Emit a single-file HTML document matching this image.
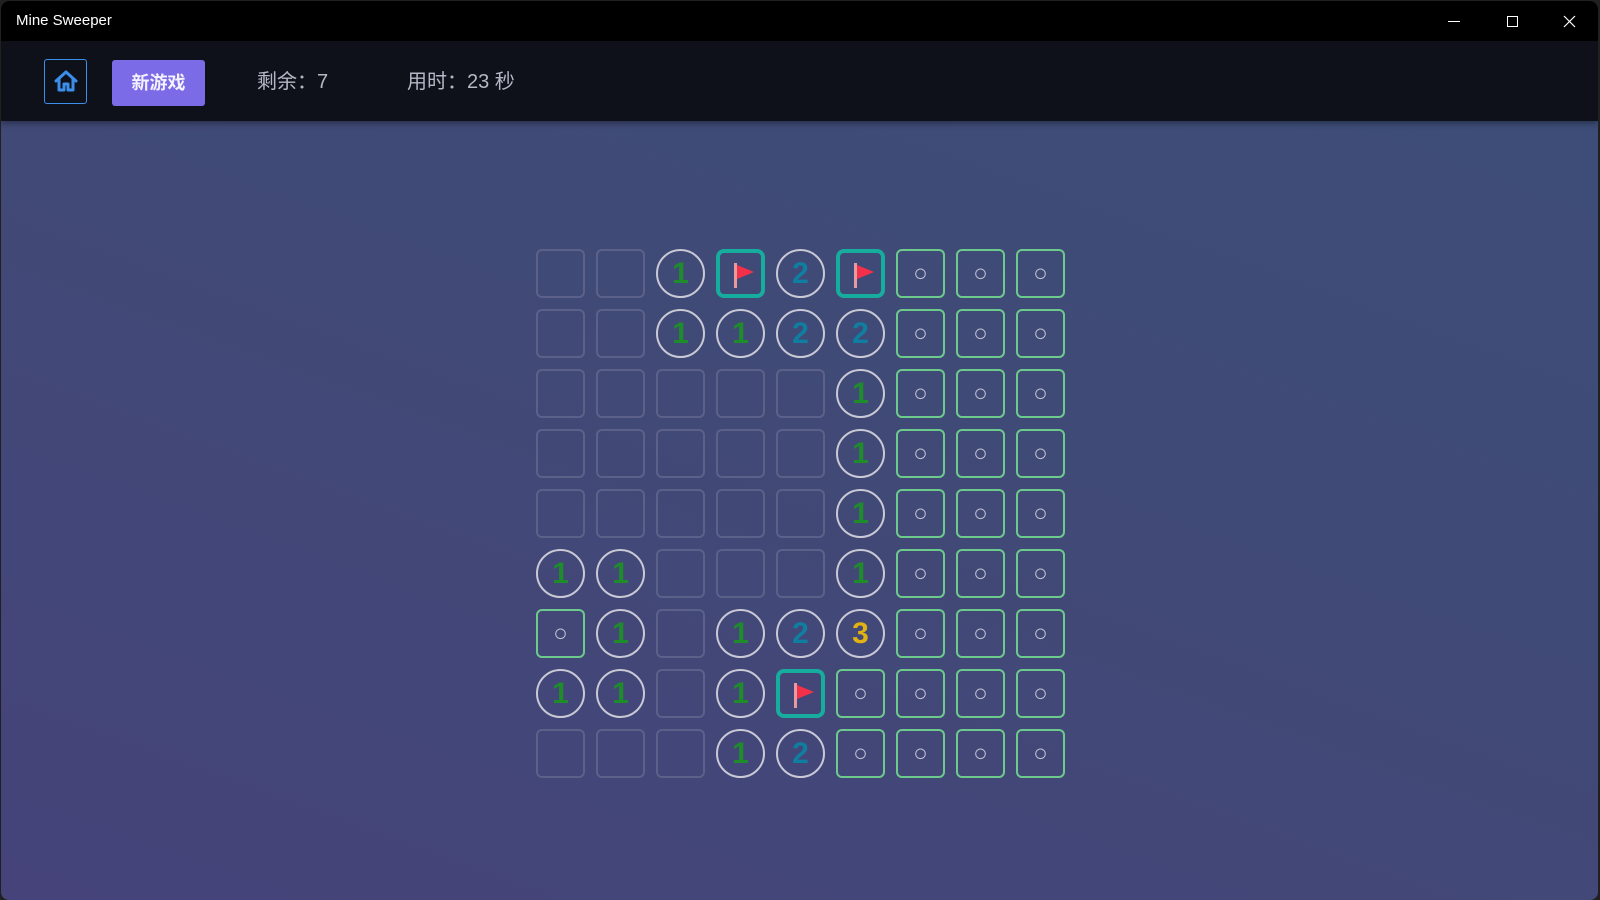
<!DOCTYPE html>
<html><head><meta charset="utf-8">
<style>
*{margin:0;padding:0;box-sizing:border-box}
html,body{width:1600px;height:900px;overflow:hidden;background:#202020;font-family:"Liberation Sans","Noto Sans CJK SC",sans-serif}
.win{position:absolute;left:1px;top:1px;width:1597px;height:899px;border-radius:8px;overflow:hidden;background:linear-gradient(20deg,#45437a 0%,#414976 50%,#3c4e78 100%)}
.title{position:absolute;left:0;top:0;width:100%;height:40px;background:#000;color:#fff;font-size:15px}
.title .t{position:absolute;left:15px;top:11px}
.ctl{position:absolute;top:0;height:40px;width:46px;color:#fff}
.bar{position:absolute;left:0;top:40px;width:100%;height:80px;background:#0f111a;box-shadow:0 2px 6px rgba(0,0,0,.4)}
.home{position:absolute;left:43px;top:18px;width:43px;height:45px;border:1px solid #3b8eea;border-radius:3px}
.home svg{position:absolute;left:9px;top:9px}
.ng{position:absolute;left:111px;top:19px;width:93px;height:46px;background:#7b6be6;border-radius:3px;color:#f4f2ff;font-size:18px;font-weight:bold;text-align:center;line-height:46px}
.lbl{position:absolute;top:24px;color:#b4b8c4;font-size:20px}
.grid{position:absolute;left:535px;top:248px}
.c{position:absolute;width:49px;height:49px;display:flex;align-items:center;justify-content:center;font-weight:bold;font-size:30px}
.e{border:2px solid #5b6189;border-radius:6px}
.n{border:2px solid #c9c9d6;border-radius:50%}
.h{border:2px solid #6ccb8c;border-radius:6px;color:#c2c4d2;font-size:24px;font-weight:normal}
.f{border:4px solid #17ad9e;border-radius:8px}
.g1{color:#1f8c2c}.g2{color:#0f7ea0}.g3{color:#e0b312}
</style></head><body>
<div class="win">
<div class="title"><span class="t">Mine Sweeper</span>
<svg class="ctl" style="left:1437px" width="46" height="40"><line x1="10" y1="20.5" x2="22" y2="20.5" stroke="#fff" stroke-width="1"/></svg>
<svg class="ctl" style="left:1500px" width="46" height="40"><rect x="6.5" y="15.5" width="10" height="10" fill="none" stroke="#fff" stroke-width="1"/></svg>
<svg class="ctl" style="left:1559px" width="46" height="40"><path d="M4 15 L15 26 M15 15 L4 26" stroke="#fff" stroke-width="1.2"/></svg>
</div>
<div class="bar">
<div class="home"><svg width="24" height="24" viewBox="0 0 24 24"><path d="M2 12 L12 3 L22 12" fill="none" stroke="#3b8eea" stroke-width="3" stroke-linejoin="round" stroke-linecap="round"/><path d="M5 10 V21 H10 V15 H14 V21 H19 V10" fill="none" stroke="#3b8eea" stroke-width="3" stroke-linejoin="round"/></svg></div>
<div class="ng">新游戏</div>
<div class="lbl" style="left:256px">剩余：7</div>
<div class="lbl" style="left:406px">用时：23 秒</div>
</div>
<div class="grid" id="g">
<div class="c e" style="left:0;top:0"></div><div class="c e" style="left:60px;top:0"></div><div class="c n g1" style="left:120px;top:0">1</div>
<div class="c f" style="left:180px;top:0"><svg width="41" height="41"><rect x="14" y="10" width="3" height="25" fill="#e89aa0"/><path d="M17 12 L34 19 L17 26Z" fill="#f2304a"/></svg></div>
<div class="c n g2" style="left:240px;top:0">2</div>
<div class="c f" style="left:300px;top:0"><svg width="41" height="41"><rect x="14" y="10" width="3" height="25" fill="#e89aa0"/><path d="M17 12 L34 19 L17 26Z" fill="#f2304a"/></svg></div>
<div class="c h" style="left:360px;top:0">○</div><div class="c h" style="left:420px;top:0">○</div><div class="c h" style="left:480px;top:0">○</div>
<div class="c e" style="left:0;top:60px"></div><div class="c e" style="left:60px;top:60px"></div><div class="c n g1" style="left:120px;top:60px">1</div><div class="c n g1" style="left:180px;top:60px">1</div><div class="c n g2" style="left:240px;top:60px">2</div><div class="c n g2" style="left:300px;top:60px">2</div>
<div class="c h" style="left:360px;top:60px">○</div><div class="c h" style="left:420px;top:60px">○</div><div class="c h" style="left:480px;top:60px">○</div>
<div class="c e" style="left:0;top:120px"></div><div class="c e" style="left:60px;top:120px"></div><div class="c e" style="left:120px;top:120px"></div><div class="c e" style="left:180px;top:120px"></div><div class="c e" style="left:240px;top:120px"></div><div class="c n g1" style="left:300px;top:120px">1</div>
<div class="c h" style="left:360px;top:120px">○</div><div class="c h" style="left:420px;top:120px">○</div><div class="c h" style="left:480px;top:120px">○</div>
<div class="c e" style="left:0;top:180px"></div><div class="c e" style="left:60px;top:180px"></div><div class="c e" style="left:120px;top:180px"></div><div class="c e" style="left:180px;top:180px"></div><div class="c e" style="left:240px;top:180px"></div><div class="c n g1" style="left:300px;top:180px">1</div>
<div class="c h" style="left:360px;top:180px">○</div><div class="c h" style="left:420px;top:180px">○</div><div class="c h" style="left:480px;top:180px">○</div>
<div class="c e" style="left:0;top:240px"></div><div class="c e" style="left:60px;top:240px"></div><div class="c e" style="left:120px;top:240px"></div><div class="c e" style="left:180px;top:240px"></div><div class="c e" style="left:240px;top:240px"></div><div class="c n g1" style="left:300px;top:240px">1</div>
<div class="c h" style="left:360px;top:240px">○</div><div class="c h" style="left:420px;top:240px">○</div><div class="c h" style="left:480px;top:240px">○</div>
<div class="c n g1" style="left:0;top:300px">1</div><div class="c n g1" style="left:60px;top:300px">1</div><div class="c e" style="left:120px;top:300px"></div><div class="c e" style="left:180px;top:300px"></div><div class="c e" style="left:240px;top:300px"></div><div class="c n g1" style="left:300px;top:300px">1</div>
<div class="c h" style="left:360px;top:300px">○</div><div class="c h" style="left:420px;top:300px">○</div><div class="c h" style="left:480px;top:300px">○</div>
<div class="c h" style="left:0;top:360px">○</div><div class="c n g1" style="left:60px;top:360px">1</div><div class="c e" style="left:120px;top:360px"></div><div class="c n g1" style="left:180px;top:360px">1</div><div class="c n g2" style="left:240px;top:360px">2</div><div class="c n g3" style="left:300px;top:360px">3</div>
<div class="c h" style="left:360px;top:360px">○</div><div class="c h" style="left:420px;top:360px">○</div><div class="c h" style="left:480px;top:360px">○</div>
<div class="c n g1" style="left:0;top:420px">1</div><div class="c n g1" style="left:60px;top:420px">1</div><div class="c e" style="left:120px;top:420px"></div><div class="c n g1" style="left:180px;top:420px">1</div>
<div class="c f" style="left:240px;top:420px"><svg width="41" height="41"><rect x="14" y="10" width="3" height="25" fill="#e89aa0"/><path d="M17 12 L34 19 L17 26Z" fill="#f2304a"/></svg></div>
<div class="c h" style="left:300px;top:420px">○</div><div class="c h" style="left:360px;top:420px">○</div><div class="c h" style="left:420px;top:420px">○</div><div class="c h" style="left:480px;top:420px">○</div>
<div class="c e" style="left:0;top:480px"></div><div class="c e" style="left:60px;top:480px"></div><div class="c e" style="left:120px;top:480px"></div><div class="c n g1" style="left:180px;top:480px">1</div><div class="c n g2" style="left:240px;top:480px">2</div>
<div class="c h" style="left:300px;top:480px">○</div><div class="c h" style="left:360px;top:480px">○</div><div class="c h" style="left:420px;top:480px">○</div><div class="c h" style="left:480px;top:480px">○</div>
</div>
</div>
</body></html>
